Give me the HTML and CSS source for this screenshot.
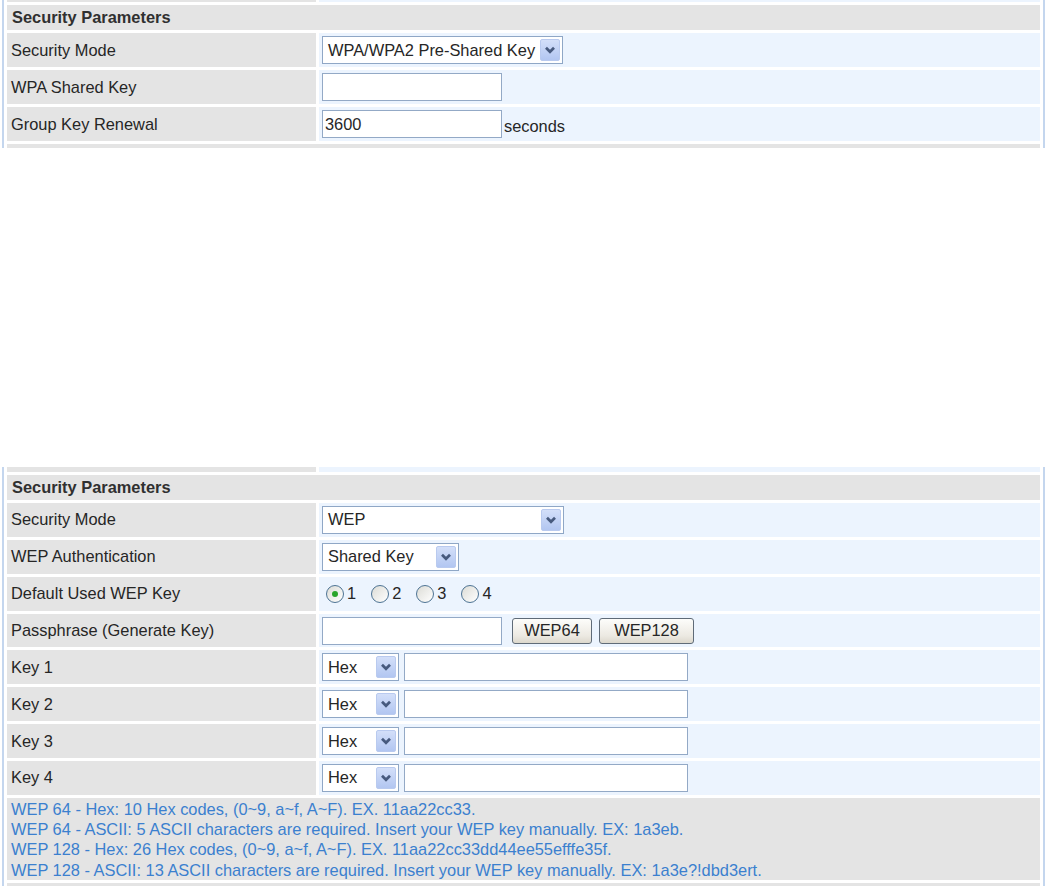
FILE: index.html
```html
<!DOCTYPE html>
<html>
<head>
<meta charset="utf-8">
<title>Security Parameters</title>
<link rel="stylesheet" href="styles.css">
</head>
<body>
<div class="panel panel-top">
  <div class="params">
    <div class="cell label stub-top"></div><div class="cell value stub-top"></div>
    <div class="cell head">Security Parameters</div>
    <div class="cell label row">Security Mode</div>
    <div class="cell value row">
      <div class="select w-mode"><span>WPA/WPA2 Pre-Shared Key</span><span class="arrow"><svg width="12" height="8" viewBox="0 0 12 8"><polyline points="2,1.8 6,5.8 10,1.8" fill="none" stroke="#475a7e" stroke-width="2.7"/></svg></span></div>
    </div>
    <div class="cell label row">WPA Shared Key</div>
    <div class="cell value row"><input class="text w-180" type="text" value=""></div>
    <div class="cell label row">Group Key Renewal</div>
    <div class="cell value row"><input class="text w-180" type="text" value="3600"><span class="unit">seconds</span></div>
    <div class="cell full stub-bottom"></div>
  </div>
</div>

<div class="panel panel-bottom">
  <div class="params">
    <div class="cell label stub-top2"></div><div class="cell value stub-top2"></div>
    <div class="cell head">Security Parameters</div>
    <div class="cell label row2">Security Mode</div>
    <div class="cell value row2">
      <div class="select w-mode2"><span>WEP</span><span class="arrow"><svg width="12" height="8" viewBox="0 0 12 8"><polyline points="2,1.8 6,5.8 10,1.8" fill="none" stroke="#475a7e" stroke-width="2.7"/></svg></span></div>
    </div>
    <div class="cell label row2">WEP Authentication</div>
    <div class="cell value row2">
      <div class="select w-auth"><span>Shared Key</span><span class="arrow"><svg width="12" height="8" viewBox="0 0 12 8"><polyline points="2,1.8 6,5.8 10,1.8" fill="none" stroke="#475a7e" stroke-width="2.7"/></svg></span></div>
    </div>
    <div class="cell label row2">Default Used WEP Key</div>
    <div class="cell value row2 radios">
      <span class="radio-item"><span class="radio checked"></span>1</span>
      <span class="radio-item"><span class="radio"></span>2</span>
      <span class="radio-item"><span class="radio"></span>3</span>
      <span class="radio-item"><span class="radio"></span>4</span>
    </div>
    <div class="cell label row2">Passphrase (Generate Key)</div>
    <div class="cell value row2">
      <input class="text w-180" type="text" value="">
      <button class="btn btn-64">WEP64</button>
      <button class="btn btn-128">WEP128</button>
    </div>
    <div class="cell label row2">Key 1</div>
    <div class="cell value row2">
      <div class="select w-hex"><span>Hex</span><span class="arrow"><svg width="12" height="8" viewBox="0 0 12 8"><polyline points="2,1.8 6,5.8 10,1.8" fill="none" stroke="#475a7e" stroke-width="2.7"/></svg></span></div>
      <input class="text w-key" type="text" value="">
    </div>
    <div class="cell label row2">Key 2</div>
    <div class="cell value row2">
      <div class="select w-hex"><span>Hex</span><span class="arrow"><svg width="12" height="8" viewBox="0 0 12 8"><polyline points="2,1.8 6,5.8 10,1.8" fill="none" stroke="#475a7e" stroke-width="2.7"/></svg></span></div>
      <input class="text w-key" type="text" value="">
    </div>
    <div class="cell label row2">Key 3</div>
    <div class="cell value row2">
      <div class="select w-hex"><span>Hex</span><span class="arrow"><svg width="12" height="8" viewBox="0 0 12 8"><polyline points="2,1.8 6,5.8 10,1.8" fill="none" stroke="#475a7e" stroke-width="2.7"/></svg></span></div>
      <input class="text w-key" type="text" value="">
    </div>
    <div class="cell label row2">Key 4</div>
    <div class="cell value row2">
      <div class="select w-hex"><span>Hex</span><span class="arrow"><svg width="12" height="8" viewBox="0 0 12 8"><polyline points="2,1.8 6,5.8 10,1.8" fill="none" stroke="#475a7e" stroke-width="2.7"/></svg></span></div>
      <input class="text w-key" type="text" value="">
    </div>
    <div class="cell full note">
      WEP 64 - Hex: 10 Hex codes, (0~9, a~f, A~F). EX. 11aa22cc33.<br>
      WEP 64 - ASCII: 5 ASCII characters are required. Insert your WEP key manually. EX: 1a3eb.<br>
      WEP 128 - Hex: 26 Hex codes, (0~9, a~f, A~F). EX. 11aa22cc33dd44ee55efffe35f.<br>
      WEP 128 - ASCII: 13 ASCII characters are required. Insert your WEP key manually. EX: 1a3e?!dbd3ert.
    </div>
    <div class="cell full stub-bottom"></div>
  </div>
</div>
</body>
</html>
```

FILE: styles.css
```css
html, body {
  margin: 0;
  padding: 0;
  background: #ffffff;
}

body {
  font-family: "Liberation Sans", Arial, sans-serif;
  font-size: 16.4px;
  color: #262626;
}

.panel {
  margin: 0 2px;
  padding: 0 3px;
  border-left: 2px solid #c4d6ee;
  border-right: 2px solid #c4d6ee;
  overflow: hidden;
}

.panel-top {
  height: 148px;
}

.panel-bottom {
  margin-top: 319px;
  height: 419px;
}

.params {
  display: grid;
  grid-template-columns: 309px 1fr;
  gap: 3px;
}

.panel-top .params {
  margin-top: -2px;
}

.cell {
  display: flex;
  align-items: center;
  box-sizing: border-box;
}

.label {
  background: #e4e4e4;
  padding-left: 4px;
}

.value {
  background: #ecf4fe;
  padding-left: 3px;
}

.full {
  grid-column: 1 / 3;
  background: #e4e4e4;
}

.head {
  grid-column: 1 / 3;
  background: #e4e4e4;
  height: 25px;
  padding-left: 5px;
  font-weight: bold;
  color: #303030;
}

.stub-top { height: 4px; }
.stub-top2 { height: 5px; }
.stub-bottom { height: 20px; }

.row { height: 34px; }
.row2 { height: 33.86px; }

/* fake select */
.select {
  display: flex;
  align-items: center;
  justify-content: space-between;
  box-sizing: border-box;
  height: 28px;
  border: 1px solid #8fa7c6;
  background: #ffffff;
  padding: 0 2px 0 5px;
  color: #262626;
}

.select .arrow {
  display: flex;
  align-items: center;
  justify-content: center;
  width: 20px;
  height: 22px;
  box-sizing: border-box;
  border-radius: 2px;
  border: 1px solid #b9caef;
  background: linear-gradient(#d3dff9, #b2c6f1);
}

.w-mode { width: 241px; }
.w-mode2 { width: 242px; }
.w-auth { width: 137px; }
.w-hex { width: 77px; }

/* text inputs */
.text {
  box-sizing: border-box;
  height: 28px;
  margin: 0;
  border: 1px solid #93a9c6;
  background: #ffffff;
  padding: 0 2px;
  font-family: "Liberation Sans", Arial, sans-serif;
  font-size: 16.4px;
  color: #262626;
  outline: none;
}

.w-180 { width: 180px; }
.w-key { width: 284px; margin-left: 5px; }

.unit {
  margin-left: 2px;
  padding-top: 4px;
}

/* buttons */
.btn {
  box-sizing: border-box;
  height: 26px;
  margin: 0;
  padding: 0;
  border: 1px solid #5f6b78;
  border-radius: 3px;
  background: linear-gradient(#fdfdfb, #ece9e2 70%, #dcd8cd);
  font-family: "Liberation Sans", Arial, sans-serif;
  font-size: 16.4px;
  color: #262626;
}

.btn-64 { width: 80px; margin-left: 10px; }
.btn-128 { width: 95px; margin-left: 7px; }

/* radios */
.radios {
  padding-left: 7px;
}

.radio-item {
  display: inline-flex;
  align-items: center;
  margin-right: 15px;
}

.radio {
  display: inline-flex;
  align-items: center;
  justify-content: center;
  width: 18px;
  height: 18px;
  box-sizing: border-box;
  border-radius: 50%;
  border: 1px solid #4d7393;
  background: linear-gradient(135deg, #dcdcd6, #ffffff);
  margin-right: 3px;
}

.radio.checked::after {
  content: "";
  width: 6px;
  height: 6px;
  border-radius: 50%;
  background: #2aa52a;
}

/* note */
.note {
  display: block;
  height: 82px;
  padding: 1px 0 0 4px;
  line-height: 20.3px;
  color: #3b80cf;
}
```
